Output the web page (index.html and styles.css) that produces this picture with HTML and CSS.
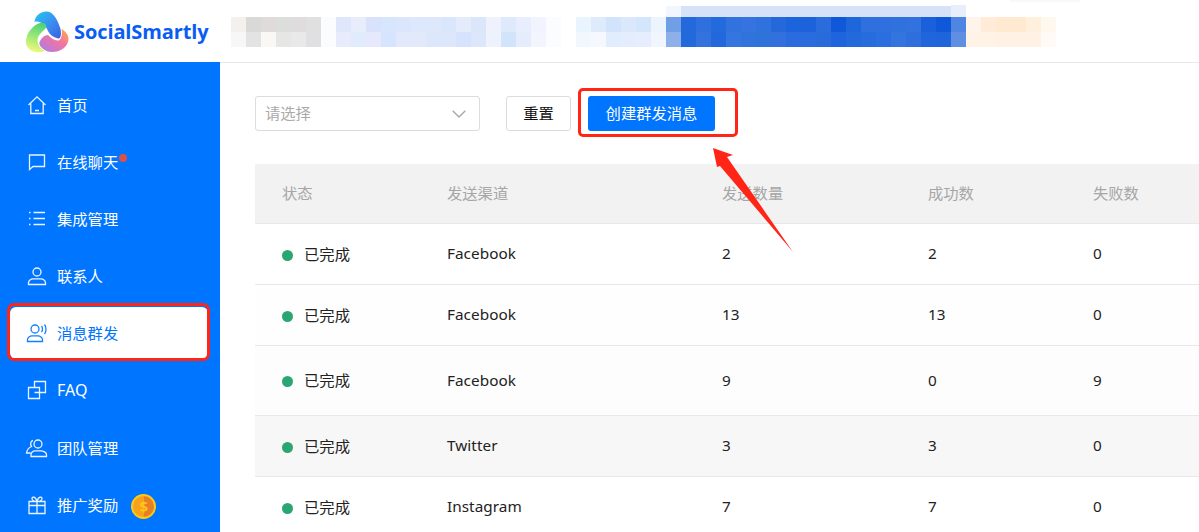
FILE: index.html
```html
<!DOCTYPE html>
<html lang="zh-CN">
<head>
<meta charset="utf-8">
<title>SocialSmartly</title>
<link rel="stylesheet" href="styles.css">
</head>
<body>
<header class="topbar">
  <div class="brand">
    <svg class="logo" viewBox="24 8 46 44" width="46" height="44" aria-hidden="true">
      <defs>
        <linearGradient id="lgBlue" x1="0" y1="0" x2="1" y2="1"><stop offset="0" stop-color="#22c8f0"/><stop offset=".55" stop-color="#3b8cf0"/><stop offset="1" stop-color="#3a5fe0"/></linearGradient>
        <linearGradient id="lgGreen" x1=".6" y1="0" x2=".4" y2="1"><stop offset="0" stop-color="#4fd27a"/><stop offset=".55" stop-color="#a5ec74"/><stop offset="1" stop-color="#f4f77e"/></linearGradient>
        <linearGradient id="lgPink" x1="1" y1="0" x2="0" y2="1"><stop offset="0" stop-color="#fdb240"/><stop offset=".4" stop-color="#f574a0"/><stop offset="1" stop-color="#a77de8"/></linearGradient>
      </defs>
      <path fill="url(#lgBlue)" d="M34.500 20C35 13 42 9 47 9.500 54 10 58 19 60.500 27 61.500 32 61 37 58 36.500 53 35 50 33 48 29 46 24 40 18 34.500 20Z"/>
      <path fill="url(#lgGreen)" d="M26 40C26 31 33 23 40 21 45 20 48 24 45 27 42 30 38 33 37.500 38 37.500 43 41 47 45 49 42 50.500 37 50.500 33 49.500 28 47 26 44 26 40Z"/>
      <path fill="url(#lgPink)" d="M61.500 27C65 29 68.500 32 68.500 37 68.500 43 63 48 57 49.500 52 50.500 47 50 44 47.500 41 45.500 38 42 40 39 42 35 45 33 48 33 52 37 56 39 59 38.500 62 36 62.500 31 61.500 27Z"/>
    </svg>
    <span class="brand-name">SocialSmartly</span>
  </div>
  <svg class="mosaic" viewBox="231 0 968 62" width="968" height="62" shape-rendering="crispEdges" aria-hidden="true">
    <rect x="1010" y="0" width="70" height="2" fill="#f9f9f9"/>
    <rect x="666" y="6" width="15" height="11" fill="#f3f6fe"/><rect x="681" y="6" width="270" height="11" fill="#d5e2f8"/><rect x="951" y="5" width="15" height="12" fill="#e8eefa"/>
    <g class="m1">
      <rect x="231" width="15" fill="#f3f0ee"/><rect x="246" width="15" fill="#d9d9d7"/><rect x="261" width="15" fill="#dfdbd9"/><rect x="276" width="15" fill="#dcdedb"/><rect x="291" width="15" fill="#dedcdc"/><rect x="306" width="15" fill="#e0e0e0"/><rect x="321" width="15" fill="#fbfcfe"/><rect x="336" width="15" fill="#dfe8fb"/><rect x="351" width="15" fill="#e8edfc"/><rect x="366" width="15" fill="#d8e3fb"/><rect x="381" width="15" fill="#d7e6fc"/><rect x="396" width="15" fill="#dbe6fc"/><rect x="411" width="30" fill="#dde8fc"/><rect x="441" width="15" fill="#d9e6fc"/><rect x="456" width="15" fill="#e4ecfc"/><rect x="471" width="15" fill="#dbe6fb"/><rect x="486" width="15" fill="#eff2fd"/><rect x="501" width="15" fill="#deeafc"/><rect x="516" width="15" fill="#e8eefd"/><rect x="531" width="15" fill="#f1f3fe"/><rect x="546" width="15" fill="#fbfcff"/><rect x="576" width="15" fill="#eaf4fe"/><rect x="591" width="15" fill="#deebfc"/><rect x="606" width="15" fill="#d2e4fc"/><rect x="621" width="15" fill="#dbe8fc"/><rect x="636" width="15" fill="#d3e6fc"/><rect x="651" width="15" fill="#ecf4fd"/><rect x="666" width="15" fill="#709fe5"/>
      <rect x="681" width="15" fill="#2369dc"/><rect x="696" width="15" fill="#3070de"/><rect x="711" width="15" fill="#236bdd"/><rect x="726" width="15" fill="#3172df"/><rect x="741" width="15" fill="#3574e0"/><rect x="756" width="15" fill="#3072dd"/><rect x="771" width="15" fill="#2468da"/><rect x="786" width="15" fill="#1c64dc"/><rect x="801" width="15" fill="#1b62dc"/><rect x="816" width="15" fill="#2a6cdc"/><rect x="831" width="15" fill="#0f58d9"/><rect x="846" width="15" fill="#1d67db"/><rect x="861" width="15" fill="#2e70de"/><rect x="876" width="15" fill="#2e70df"/><rect x="891" width="15" fill="#3072dd"/><rect x="906" width="15" fill="#3172de"/><rect x="921" width="15" fill="#1a60da"/><rect x="936" width="15" fill="#0f58d9"/><rect x="951" width="15" fill="#4f86e2"/>
      <rect x="966" width="15" fill="#fff4e9"/><rect x="981" width="15" fill="#ffebd8"/><rect x="996" width="30" fill="#ffe9d1"/><rect x="1026" width="15" fill="#fff0de"/><rect x="1041" width="15" fill="#fff8ef"/>
    </g>
    <g class="m2">
      <rect x="231" width="15" fill="#f7f7f7"/><rect x="246" width="15" fill="#e3e3e3"/><rect x="261" width="15" fill="#f9f8f5"/><rect x="276" width="15" fill="#e6e6e4"/><rect x="291" width="15" fill="#e8e9e8"/><rect x="306" width="15" fill="#e0dfe1"/><rect x="321" width="15" fill="#fbfcfe"/><rect x="336" width="15" fill="#e7ebfb"/><rect x="351" width="15" fill="#e0ebfc"/><rect x="366" width="15" fill="#e5e9fb"/><rect x="381" width="15" fill="#d6e5fd"/><rect x="396" width="15" fill="#e3e9fd"/><rect x="411" width="15" fill="#e2e9fb"/><rect x="426" width="30" fill="#dde7fc"/><rect x="456" width="15" fill="#d7e3fc"/><rect x="471" width="15" fill="#dce7fc"/><rect x="486" width="15" fill="#eef2fd"/><rect x="501" width="15" fill="#d2e3fc"/><rect x="516" width="15" fill="#e5edfd"/><rect x="531" width="15" fill="#f3f5fe"/><rect x="546" width="15" fill="#fbfcff"/><rect x="576" width="15" fill="#f2f7fe"/><rect x="591" width="15" fill="#f5f8fe"/><rect x="606" width="15" fill="#e1ecfd"/><rect x="621" width="15" fill="#e3edfd"/><rect x="636" width="15" fill="#e6eefd"/><rect x="651" width="15" fill="#f0f5fe"/><rect x="666" width="15" fill="#8eb0e8"/>
      <rect x="681" width="15" fill="#2269dc"/><rect x="696" width="15" fill="#3473de"/><rect x="711" width="15" fill="#2267dc"/><rect x="726" width="15" fill="#3575df"/><rect x="741" width="15" fill="#3173dd"/><rect x="756" width="15" fill="#2e72da"/><rect x="771" width="15" fill="#3170dd"/><rect x="786" width="15" fill="#2a6bdd"/><rect x="801" width="15" fill="#2a6cdd"/><rect x="816" width="15" fill="#2a6bdc"/><rect x="831" width="15" fill="#1e64dd"/><rect x="846" width="15" fill="#2269db"/><rect x="861" width="15" fill="#266cdc"/><rect x="876" width="15" fill="#2a6edf"/><rect x="891" width="15" fill="#3374de"/><rect x="906" width="15" fill="#2e6fdd"/><rect x="921" width="15" fill="#1f65dc"/><rect x="936" width="15" fill="#1e65dc"/><rect x="951" width="15" fill="#5f8fe3"/>
      <rect x="966" width="15" fill="#fff3e7"/><rect x="981" width="15" fill="#fff3e5"/><rect x="996" width="15" fill="#fff1e3"/><rect x="1011" width="30" fill="#fff2e4"/><rect x="1041" width="15" fill="#fffaf5"/>
    </g>
  </svg>
</header>

<div class="layout">
  <nav class="sidebar">
    <a class="nav-item">
      <svg class="nav-icon" viewBox="0 0 20 20"><path d="M1.500 10 10 1.800 18.500 10M3.800 8.500V18.500H16.200V8.500M8 15.500H12"/></svg>
      <span class="nav-label">首页</span>
    </a>
    <a class="nav-item">
      <svg class="nav-icon" viewBox="0 0 20 20"><path d="M2.500 3H17.500V14.500H6L2.500 17.500Z"/></svg>
      <span class="nav-label">在线聊天<i class="red-dot"></i></span>
    </a>
    <a class="nav-item">
      <svg class="nav-icon" viewBox="0 0 20 20"><path d="M6.500 3.500H18M6.500 9.500H18M6.500 15.500H18M2 3.500H3.500M2 9.500H3.500M2 15.500H3.500"/></svg>
      <span class="nav-label">集成管理</span>
    </a>
    <a class="nav-item">
      <svg class="nav-icon" viewBox="0 0 20 20"><circle cx="10" cy="6" r="4"/><path d="M1.500 18.500V16.500C1.500 14.500 4 12.800 6 12.800H14C16 12.800 18.500 14.500 18.500 16.500V18.500Z"/></svg>
      <span class="nav-label">联系人</span>
    </a>
    <a class="nav-item is-active">
      <svg class="nav-icon" viewBox="0 0 20 20"><circle cx="8" cy="6" r="4"/><path d="M.5 18.500V16.500C.5 14.500 3 12.800 5 12.800H11C13 12.800 15.500 14.500 15.500 16.500V18.500ZM14.500 3C15.800 4.500 15.800 7.500 14.500 9M17.500 1.500C19.500 4 19.500 8.500 17.500 11"/></svg>
      <span class="nav-label">消息群发</span>
    </a>
    <a class="nav-item">
      <svg class="nav-icon" viewBox="0 0 20 20"><path d="M1.500 7.500H12.500V18.500H1.500ZM7.500 7.500V1.500H18.500V12.500H12.500M7.500 12.500H12.500"/></svg>
      <span class="nav-latin">FAQ</span>
    </a>
    <a class="nav-item">
      <svg class="nav-icon" viewBox="0 0 20 20"><circle cx="11" cy="6" r="4"/><path d="M4 18.500V16.500C4 14.500 6 12.800 8 12.800H14C16 12.800 19.500 14.500 19.500 16.500V18.500ZM6 2.500C3.500 3 3 6.500 4.500 8.500 2 9.500 0 11.500 -.5 15H3.500"/></svg>
      <span class="nav-label">团队管理</span>
    </a>
    <a class="nav-item">
      <svg class="nav-icon" viewBox="0 0 20 20"><path d="M2 6.500H18V18.500H2ZM2 10.500H18M10 6.500V18.500M10 6.500C7 6.500 5 5 5 3.500 5 1.500 8.500 1 10 6.500ZM10 6.500C13 6.500 15 5 15 3.500 15 1.500 11.500 1 10 6.500Z"/></svg>
      <span class="nav-label">推广奖励</span>
      <span class="coin"><span class="coin-mark">$</span></span>
    </a>
    <div class="mark-nav"></div>
  </nav>

  <main class="content">
    <div class="filters">
      <div class="select">
        <span class="placeholder">请选择</span>
        <svg class="chevron" viewBox="0 0 14 8" width="14" height="8"><path d="M.7.7 7 7 13.300.7"/></svg>
      </div>
      <button class="btn btn-reset">重置</button>
      <button class="btn btn-primary">创建群发消息</button>
    </div>

    <table class="data">
      <colgroup><col class="c1"><col class="c2"><col class="c3"><col class="c4"><col class="c5"></colgroup>
      <thead>
        <tr><th>状态</th><th>发送渠道</th><th>发送数量</th><th>成功数</th><th>失败数</th></tr>
      </thead>
      <tbody>
        <tr class="r1"><td class="status"><i class="dot"></i>已完成</td><td>Facebook</td><td>2</td><td>2</td><td>0</td></tr>
        <tr class="r2"><td class="status"><i class="dot"></i>已完成</td><td>Facebook</td><td>13</td><td>13</td><td>0</td></tr>
        <tr class="r3"><td class="status"><i class="dot"></i>已完成</td><td>Facebook</td><td>9</td><td>0</td><td>9</td></tr>
        <tr class="r4"><td class="status"><i class="dot"></i>已完成</td><td>Twitter</td><td>3</td><td>3</td><td>0</td></tr>
        <tr class="r5"><td class="status"><i class="dot"></i>已完成</td><td>Instagram</td><td>7</td><td>7</td><td>0</td></tr>
      </tbody>
    </table>
  </main>
</div>

<div class="mark-btn"></div>
<svg class="mark-arrow" viewBox="0 0 100 120" width="100" height="120" aria-hidden="true">
  <polygon points="13,8 33,15 27,17 93,112 20,26 17,27"/>
</svg>
</body>
</html>
```
FILE: styles.css
```css
* { box-sizing: border-box; }
html, body { margin: 0; height: 100%; overflow: hidden; background: #fff; }
body {
  position: relative;
  font-family: "Noto Sans", "Noto Sans CJK SC", sans-serif;
  font-size: 15.3px;
  color: #222;
}

.topbar {
  display: flex;
  height: 63px;
  border-bottom: 1px solid #e8e8e8;
}
.brand {
  width: 231px;
  flex: none;
  display: flex;
  align-items: center;
  padding: 0 0 0 24px;
  gap: 4px;
}
.logo { flex: none; margin-top: 2px; }
.brand-name {
  font-family: "Open Sans", sans-serif;
  font-weight: 700;
  font-size: 20px;
  color: #0a5df2;
  letter-spacing: -.1px;
}
.mosaic { flex: none; display: block; }
.m1 rect { y: 17px; height: 15px; }
.m2 rect { y: 32px; height: 15px; }

.layout { display: flex; height: 470px; margin-top: -1px; }

.sidebar {
  position: relative;
  width: 220px;
  flex: none;
  background: #0075ff;
  padding: 17px 0 0 10px;
}
.nav-item {
  display: flex;
  align-items: center;
  gap: 10px;
  width: 198px;
  height: 52px;
  margin-bottom: 5.1px;
  padding-left: 17px;
  color: #fff;
  border-radius: 6px;
}
.nav-icon {
  width: 20px;
  height: 20px;
  flex: none;
  fill: none;
  stroke: currentColor;
  stroke-width: 1.3;
  overflow: visible;
  opacity: .92;
}
.nav-label { position: relative; padding-bottom: 2px; }
.nav-latin { font-size: 16px; }
.is-active { background: #fff; color: #0075ff; }
.red-dot {
  position: absolute;
  top: 4px;
  right: -9px;
  width: 8px;
  height: 8px;
  border-radius: 50%;
  background: #d9524a;
}
.coin {
  width: 25px;
  height: 25px;
  margin: 3px 0 0 3px;
  border-radius: 50%;
  border: 2px solid #ffca12;
  background: linear-gradient(to right, #f6a21e 50%, #e67f26 50%);
  display: flex;
  align-items: center;
  justify-content: center;
}
.coin-mark { color: #ffc916; font-size: 15px; line-height: 1; font-weight: 600; }
.mark-nav {
  position: absolute;
  left: 7px;
  top: 241px;
  width: 203px;
  height: 58px;
  border: 3.500px solid #ff2618;
  border-radius: 7px;
}

.content {
  flex: 1;
  min-width: 0;
  padding: 34px 0 0 35px;
  overflow: hidden;
}
.filters { display: flex; align-items: stretch; height: 35px; }
.select {
  width: 225px;
  display: flex;
  align-items: center;
  justify-content: space-between;
  padding: 0 13px 0 9px;
  border: 1px solid #dcdcdc;
  border-radius: 3px;
}
.placeholder { color: #aaa; padding-bottom: 4px; }
.chevron { fill: none; stroke: #a8a8a8; stroke-width: 1.4; }
.btn {
  font: inherit;
  height: 35px;
  border-radius: 3px;
  padding: 0 0 3px;
  cursor: pointer;
}
.btn-reset {
  width: 65px;
  margin-left: 26px;
  background: #fff;
  border: 1px solid #dcdcdc;
  color: #111;
}
.btn-primary {
  width: 127px;
  margin-left: 17px;
  background: #0075ff;
  border: 0;
  color: #fff;
}

.data {
  margin-top: 33px;
  width: 100%;
  table-layout: fixed;
  border-collapse: separate;
  border-spacing: 0;
}
.c1 { width: 165px; }
.c2 { width: 275px; }
.c3 { width: 206px; }
.c4 { width: 165px; }
.data th {
  height: 60px;
  padding: 0 0 4px 27px;
  text-align: left;
  font-weight: 400;
  color: #a6a6a6;
  background: #f2f2f2;
  border-bottom: 1px solid #e6e8f0;
}
.data td {
  padding: 0 0 2px 27px;
  letter-spacing: .05px;
  border-bottom: 1px solid #e6e8f0;
}
.data .status { padding-bottom: 3px; }
.r1 td { height: 61px; }
.r2 td { height: 61px; background: #fefefe; }
.r3 td { height: 70px; background: #fdfdfd; }
.r4 td { height: 61px; background: #f7f7f7; }
.r5 td { height: 60px; border-bottom: 0; }
.dot {
  display: inline-block;
  width: 11px;
  height: 11px;
  margin-right: 11px;
  border-radius: 50%;
  background: #2ba672;
  vertical-align: -1px;
}

.mark-btn {
  position: absolute;
  left: 578px;
  top: 88px;
  width: 160px;
  height: 49px;
  border: 3px solid #ff2618;
  border-radius: 5px;
}
.mark-arrow {
  position: absolute;
  left: 700px;
  top: 140px;
  fill: #ff2618;
}
```
